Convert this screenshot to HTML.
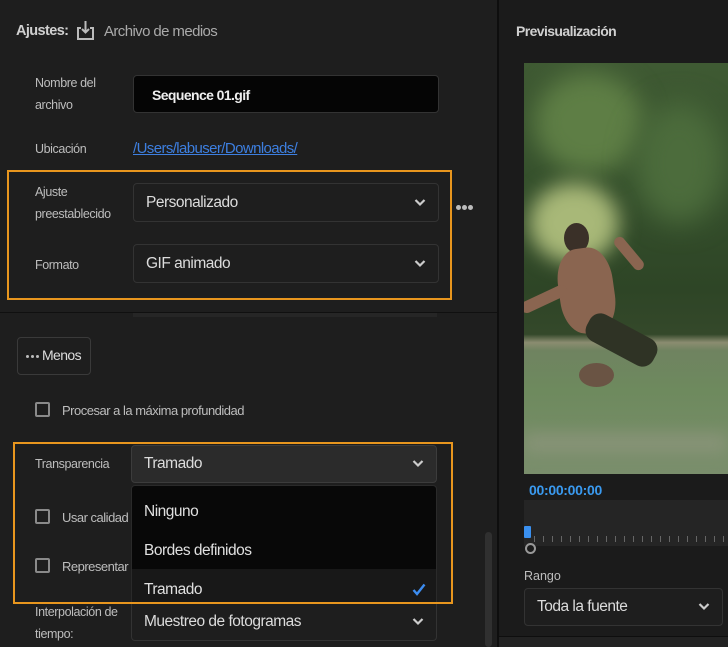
<!DOCTYPE html>
<html><head><meta charset="utf-8"><style>
*{margin:0;padding:0;box-sizing:border-box}
body{width:728px;height:647px;background:#1e1e1e;font-family:"Liberation Sans",sans-serif;color:#c8c8c8;position:relative;overflow:hidden;font-size:13px}
.a{position:absolute}
.lbl{font-size:12.5px;color:#bdbdbd;line-height:22px;letter-spacing:-0.4px}
.dd{position:absolute;background:#1e1e1e;border:1px solid #333;border-radius:4px;font-size:15.5px;color:#dcdcdc;padding-left:12px;display:flex;align-items:center;letter-spacing:-0.5px}
.chev{position:absolute;right:12px;top:50%;margin-top:-5px}
.cb{position:absolute;width:15px;height:15px;border:2px solid #8a8a8a;border-radius:2px}
.ctext{position:absolute;font-size:13px;color:#bdbdbd;letter-spacing:-0.5px}
.dot{display:inline-block;width:4px;height:4px;border-radius:50%;background:#bbb;margin-right:2px;vertical-align:middle}
</style></head><body>
<div class="a" style="left:16px;top:23px;font-weight:bold;font-size:14.5px;color:#d0d0d0;letter-spacing:-0.6px">Ajustes:</div>
<svg class="a" style="left:76px;top:20px" width="19" height="21" viewBox="0 0 19 21"><path d="M5 8H2v11h15V8h-3" fill="none" stroke="#bbb" stroke-width="2"/><path d="M9.5 1v11M6 9l3.5 3.5L13 9" fill="none" stroke="#bbb" stroke-width="2"/></svg>
<div class="a" style="left:104px;top:23px;font-size:15px;color:#aaa;letter-spacing:-0.6px">Archivo de medios</div>

<div class="a lbl" style="left:35px;top:72px">Nombre del<br>archivo</div>
<div class="a" style="left:133px;top:75px;width:306px;height:38px;background:#050505;border:1px solid #333;border-radius:4px;font-weight:bold;font-size:14px;color:#eee;padding:11px 0 0 18px;letter-spacing:-0.6px">Sequence 01.gif</div>
<div class="a lbl" style="left:35px;top:138px">Ubicación</div>
<div class="a" style="left:133px;top:140px;font-size:15px;color:#3d7fe0;text-decoration:underline;letter-spacing:-0.6px">/Users/labuser/Downloads/</div>

<div class="a lbl" style="left:35px;top:181px">Ajuste<br>preestablecido</div>
<div class="dd" style="left:133px;top:183px;width:306px;height:39px">Personalizado<svg class="chev" width="12" height="9" viewBox="0 0 12 9"><path d="M1.5 2l4.5 4.5L10.5 2" fill="none" stroke="#ccc" stroke-width="2.2"/></svg></div>
<div class="a" style="left:456px;top:199px"><span class="dot" style="width:5px;height:5px;margin-right:1px"></span><span class="dot" style="width:5px;height:5px;margin-right:1px"></span><span class="dot" style="width:5px;height:5px"></span></div>
<div class="a lbl" style="left:35px;top:254px">Formato</div>
<div class="dd" style="left:133px;top:244px;width:306px;height:39px">GIF animado<svg class="chev" width="12" height="9" viewBox="0 0 12 9"><path d="M1.5 2l4.5 4.5L10.5 2" fill="none" stroke="#ccc" stroke-width="2.2"/></svg></div>
<div class="a" style="left:7px;top:170px;width:445px;height:130px;border:2px solid #e8961e"></div>

<div class="a" style="left:133px;top:312px;width:304px;height:5px;background:#262626"></div>
<div class="a" style="left:0;top:312px;width:497px;height:1px;background:#101010"></div>

<div class="a" style="left:17px;top:337px;width:74px;height:38px;border:1px solid #3a3a3a;border-radius:4px;font-size:14px;color:#ddd;padding:9px 0 0 8px;letter-spacing:-0.6px"><span class="dot" style="width:3px;height:3px"></span><span class="dot" style="width:3px;height:3px"></span><span class="dot" style="width:3px;height:3px;margin-right:3px"></span>Menos</div>

<div class="cb" style="left:35px;top:402px"></div>
<div class="ctext" style="left:62px;top:403px">Procesar a la máxima profundidad</div>

<div class="a lbl" style="left:35px;top:453px">Transparencia</div>
<div class="dd" style="left:131px;top:445px;width:306px;height:38px;background:#2b2b2b;border-color:#3c3c3c">Tramado<svg class="chev" width="12" height="9" viewBox="0 0 12 9"><path d="M1.5 2l4.5 4.5L10.5 2" fill="none" stroke="#ccc" stroke-width="2.2"/></svg></div>
<div class="cb" style="left:35px;top:509px"></div>
<div class="ctext" style="left:62px;top:510px">Usar calidad de</div>
<div class="cb" style="left:35px;top:558px"></div>
<div class="ctext" style="left:62px;top:559px">Representar so</div>

<div class="a" style="left:131px;top:485px;width:306px;height:127px;background:#080808;border:1px solid #2a2a2a;border-radius:4px;overflow:hidden">
<div class="a" style="left:12px;top:17px;font-size:15.5px;color:#e0e0e0;letter-spacing:-0.5px">Ninguno</div>
<div class="a" style="left:12px;top:56px;font-size:15.5px;color:#e0e0e0;letter-spacing:-0.5px">Bordes definidos</div>
<div class="a" style="left:0;top:83px;width:306px;height:44px;background:#181818"></div>
<div class="a" style="left:12px;top:95px;font-size:15.5px;color:#e0e0e0;letter-spacing:-0.5px">Tramado</div>
<svg class="a" style="left:280px;top:97px" width="14" height="13" viewBox="0 0 14 13"><path d="M1.5 7l3.5 4L12.5 1.5" fill="none" stroke="#3c8cf0" stroke-width="2.4"/></svg>
</div>

<div class="a lbl" style="left:35px;top:601px">Interpolación de<br>tiempo:</div>
<div class="dd" style="left:131px;top:603px;width:306px;height:38px;border-top:none;border-radius:0 0 4px 4px">Muestreo de fotogramas<svg class="chev" width="12" height="9" viewBox="0 0 12 9"><path d="M1.5 2l4.5 4.5L10.5 2" fill="none" stroke="#ccc" stroke-width="2.2"/></svg></div>
<div class="a" style="left:13px;top:442px;width:440px;height:162px;border:2px solid #e8961e"></div>

<div class="a" style="left:485px;top:532px;width:7px;height:115px;background:#303030;border-radius:4px"></div>

<div class="a" style="left:497px;top:0;width:2px;height:647px;background:#0e0e0e"></div>
<div class="a" style="left:499px;top:0;width:229px;height:647px;background:#1b1b1b"></div>
<div class="a" style="left:516px;top:23px;font-weight:bold;font-size:14px;color:#d0d0d0;letter-spacing:-0.6px">Previsualización</div>
<div class="a" style="left:524px;top:63px;width:204px;height:411px;overflow:hidden;background:linear-gradient(#3f5a33 0%,#35502c 30%,#2e4526 55%,#34482a 66%,#8b8c70 68%,#6f8360 70%,#6e8a5e 80%,#7a8e6c 100%)">
<div class="a" style="left:10px;top:10px;width:110px;height:100px;border-radius:50%;background:#5e7e45;filter:blur(12px)"></div>
<div class="a" style="left:110px;top:40px;width:90px;height:120px;border-radius:50%;background:#4c6c3c;filter:blur(14px)"></div>
<div class="a" style="left:5px;top:120px;width:90px;height:80px;border-radius:50%;background:#a8b878;filter:blur(10px)"></div>
<div class="a" style="left:40px;top:160px;width:25px;height:30px;border-radius:50%;background:#3a3028"></div>
<div class="a" style="left:35px;top:185px;width:55px;height:85px;border-radius:40%;background:#8a6550;transform:rotate(-8deg)"></div>
<div class="a" style="left:-5px;top:230px;width:50px;height:12px;border-radius:6px;background:#8a6550;transform:rotate(-25deg)"></div>
<div class="a" style="left:85px;top:185px;width:40px;height:11px;border-radius:6px;background:#8a6550;transform:rotate(50deg)"></div>
<div class="a" style="left:60px;top:262px;width:75px;height:30px;border-radius:12px;background:#2f3325;transform:rotate(28deg)"></div>
<div class="a" style="left:55px;top:300px;width:35px;height:24px;border-radius:50%;background:#6a5444"></div>
<div class="a" style="left:0;top:370px;width:204px;height:20px;background:#9a9a88;filter:blur(8px);opacity:.5"></div>
</div>
<div class="a" style="left:529px;top:482px;font-weight:bold;font-size:14px;color:#3a9af0;letter-spacing:-0.3px">00:00:00:00</div>
<div class="a" style="left:524px;top:500px;width:204px;height:46px;background:#252525"></div>
<div class="a" style="left:534px;top:536px;width:194px;height:6px;background:repeating-linear-gradient(90deg,#666 0 1px,transparent 1px 9px)"></div>
<div class="a" style="left:524px;top:526px;width:7px;height:12px;background:#3a90f0;border-radius:1px"></div>
<div class="a" style="left:525px;top:543px;width:11px;height:11px;border:2px solid #999;border-radius:50%"></div>
<div class="a" style="left:524px;top:569px;font-size:12.5px;color:#bdbdbd">Rango</div>
<div class="dd" style="left:524px;top:588px;width:199px;height:38px">Toda la fuente<svg class="chev" width="12" height="9" viewBox="0 0 12 9"><path d="M1.5 2l4.5 4.5L10.5 2" fill="none" stroke="#ccc" stroke-width="2.2"/></svg></div>
<div class="a" style="left:499px;top:636px;width:229px;height:11px;background:#222;border-top:1px solid #0e0e0e"></div>
</body></html>
